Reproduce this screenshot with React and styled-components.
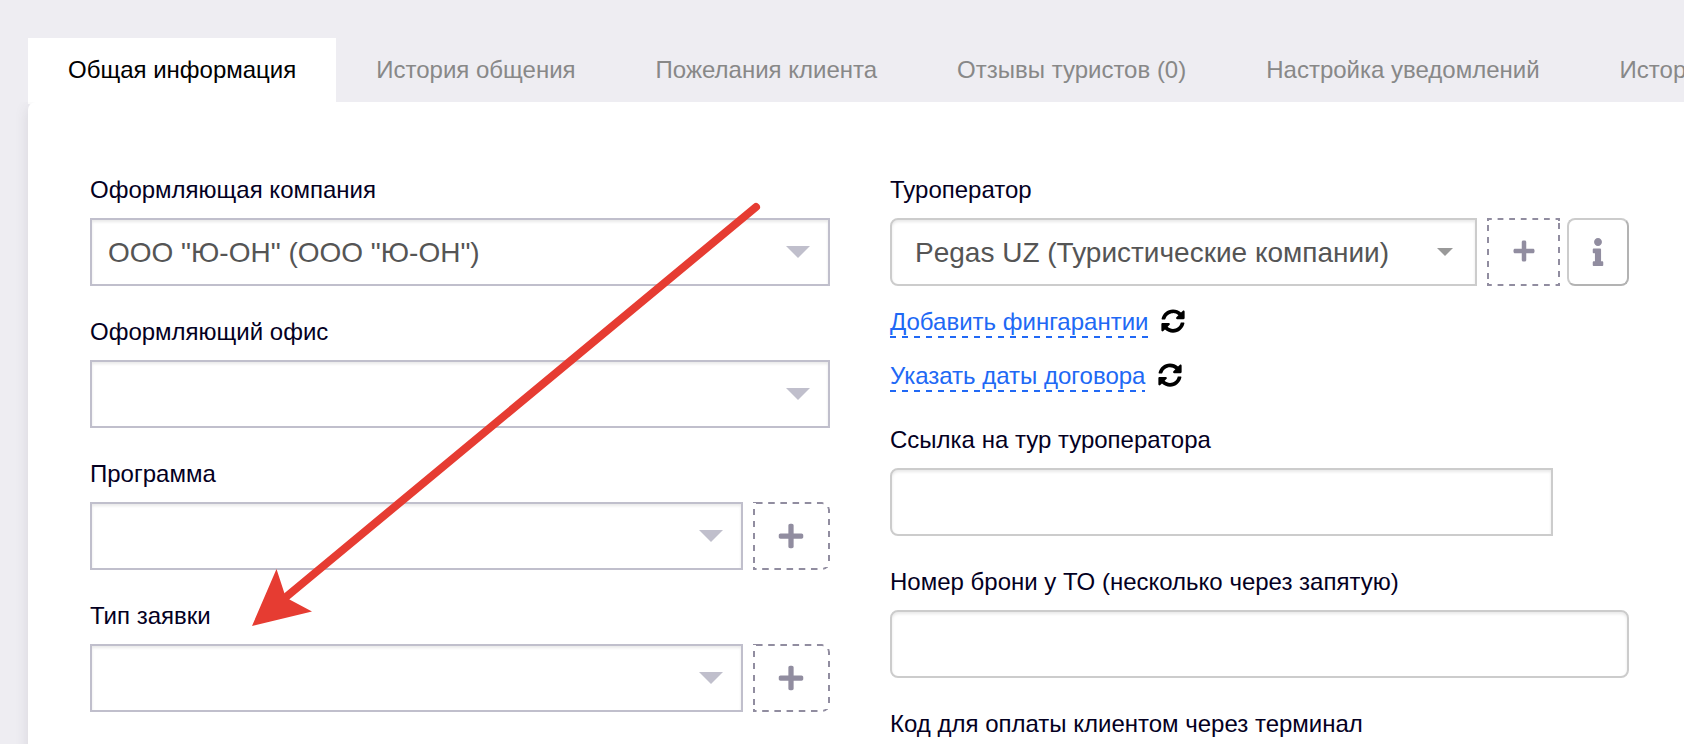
import React from 'react'
import styled, { createGlobalStyle } from 'styled-components'
import { FaSyncAlt, FaPlus, FaInfo } from 'react-icons/fa'

const GlobalStyle = createGlobalStyle`
  * {
    box-sizing: border-box;
  }

  body {
    margin: 0;
    background-color: #eeedf2;
    font-family: "Liberation Sans", Arial, sans-serif;
    font-size: 24px;
    color: #04001f;
  }
`

const StyledPage = styled.div`
  position: relative;
  height: 744px;
  padding: 38px 0 0 28px;
  overflow: hidden;
`

const StyledTabs = styled.nav`
  display: flex;
  height: 64px;
`

const StyledTab = styled.a`
  position: relative;
  flex: none;
  height: ${({ $active }) => ($active ? '66px' : '64px')};
  padding: 0 40px;
  line-height: 64px;
  white-space: nowrap;
  color: ${({ $active }) => ($active ? '#000000' : '#888888')};
  background-color: ${({ $active }) => ($active ? '#ffffff' : 'transparent')};
`

const StyledPanel = styled.main`
  display: flex;
  gap: 60px;
  height: 720px;
  padding: 74px 55px 0 62px;
  background-color: #ffffff;
  border-radius: 8px 0 0 0;
  box-shadow: 0 4px 14px rgba(69, 65, 78, 0.13);
  clip-path: inset(0 0 0 -28px);
`

const StyledColumn = styled.div`
  display: flex;
  flex-direction: column;
  gap: 32px;
  width: ${({ $width }) => $width};
`

const StyledField = styled.div`
  display: flex;
  flex-direction: column;
`

const StyledLabel = styled.label`
  height: 42px;
  line-height: 28px;
  white-space: nowrap;
`

const StyledRow = styled.div`
  display: flex;
  height: 68px;
`

const StyledControl = styled.div`
  display: flex;
  align-items: center;
  justify-content: space-between;
  flex: 1;
  height: 68px;
  margin-right: ${({ $offset }) => $offset || 0};
  padding: 0 18px 0 16px;
  border: 2px solid #c0bfcc;
  background-color: #ffffff;
  box-shadow: inset 0 2px 3px rgba(0, 0, 0, 0.09);
  font-size: 28px;
  white-space: nowrap;
  color: #555555;
`

const StyledInput = styled(StyledControl)`
  padding: 0 22px 0 23px;
  border-color: #cccccc;
  border-radius: ${({ $grouped }) => ($grouped ? '8px 0 0 8px' : '8px')};
`

const StyledValue = styled.span`
  padding-top: 2px;
`

const StyledCaret = styled.span`
  border-style: solid;
  border-color: ${({ $small }) => ($small ? '#999999' : '#c0bfcc')} transparent transparent;
  border-width: ${({ $small }) => ($small ? '8px 8px 0' : '12px 12px 0')};
`

const StyledAddButton = styled.button`
  position: relative;
  display: flex;
  align-items: center;
  justify-content: center;
  width: ${({ $compact }) => ($compact ? '73px' : '77px')};
  margin-left: 10px;
  padding: ${({ $compact }) => ($compact ? '0 0 2px 0' : '0 1px 1px 0')};
  border: 0;
  background-color: #ffffff;
  color: #918da0;
  font-size: ${({ $compact }) => ($compact ? '24px' : '28px')};

  /* dashed frame: a solid border cut by a mask, for an even 6px rhythm */
  &::before {
    content: '';
    position: absolute;
    inset: 0;
    border: 2px solid #918da0;
    border-radius: ${({ $compact }) => ($compact ? '0' : '0 8px 8px 0')};
    mask:
      linear-gradient(90deg, #000 50%, transparent 0) ${({ $compact }) => ($compact ? '-1px 0 / 11.6px' : '3px 0 / 12.2px')} 3px repeat-x,
      linear-gradient(90deg, #000 50%, transparent 0) ${({ $compact }) => ($compact ? '-1px 100% / 11.6px' : '-3px 100% / 12.2px')} 3px repeat-x,
      linear-gradient(#000 50%, transparent 0) 0 -5px / 3px 12px repeat-y,
      linear-gradient(#000 50%, transparent 0) 100% -7px / 3px 12px repeat-y;
  }
`

const StyledInfoButton = styled.button`
  display: flex;
  align-items: center;
  justify-content: center;
  width: 62px;
  margin-left: 7px;
  padding: 0 0 1px;
  border: 2px solid;
  border-color: #cccccc #b3b3b3 #b3b3b3 #cccccc;
  border-radius: 8px;
  background-color: #ffffff;
  color: #918da0;
  font-size: 28px;
`

const StyledLinks = styled.div`
  display: flex;
  flex-direction: column;
  gap: 22px;
  padding: 20px 0 2px;
`

const StyledLinkRow = styled.div`
  display: flex;
  gap: 13px;
  height: 32px;

  svg {
    margin-top: 3px;
  }
`

const StyledLink = styled.a`
  height: 32px;
  line-height: 32px;
  color: #2068f5;
  background: linear-gradient(90deg, #2068f5 50%, transparent 0) 0 100% / 12px 2px repeat-x;
`

const StyledArrow = styled.svg`
  position: absolute;
  top: 0;
  left: 0;
  pointer-events: none;
`

const tabs = [
  'Общая информация',
  'История общения',
  'Пожелания клиента',
  'Отзывы туристов (0)',
  'Настройка уведомлений',
  'История',
]

const selects = [
  { label: 'Оформляющая компания', value: 'ООО "Ю-ОН" (ООО "Ю-ОН")' },
  { label: 'Оформляющий офис' },
  { label: 'Программа', add: true },
  { label: 'Тип заявки', add: true },
]

const links = ['Добавить фингарантии', 'Указать даты договора']

const Field = ({ label, children }) => (
  <StyledField>
    <StyledLabel>{label}</StyledLabel>
    <StyledRow>{children}</StyledRow>
  </StyledField>
)

const App = () => {
  return (
    <>
      <GlobalStyle />
      <StyledPage>
        <StyledTabs>
          {tabs.map((tab, i) => (
            <StyledTab key={tab} $active={i === 0}>{tab}</StyledTab>
          ))}
        </StyledTabs>
        <StyledPanel>
          <StyledColumn $width="740px">
            {selects.map(({ label, value, add }) => (
              <Field key={label} label={label}>
                <StyledControl>
                  <StyledValue>{value}</StyledValue>
                  <StyledCaret />
                </StyledControl>
                {add && <StyledAddButton><FaPlus /></StyledAddButton>}
              </Field>
            ))}
          </StyledColumn>
          <StyledColumn $width="739px">
            <StyledField>
              <Field label="Туроператор">
                <StyledInput $grouped>
                  <StyledValue>Pegas UZ (Туристические компании)</StyledValue>
                  <StyledCaret $small />
                </StyledInput>
                <StyledAddButton $compact><FaPlus /></StyledAddButton>
                <StyledInfoButton><FaInfo /></StyledInfoButton>
              </Field>
              <StyledLinks>
                {links.map((link) => (
                  <StyledLinkRow key={link}>
                    <StyledLink>{link}</StyledLink>
                    <FaSyncAlt color="#000000" size={24} />
                  </StyledLinkRow>
                ))}
              </StyledLinks>
            </StyledField>
            <Field label="Ссылка на тур туроператора">
              <StyledInput $grouped $offset="76px" />
            </Field>
            <Field label="Номер брони у ТО (несколько через запятую)">
              <StyledInput />
            </Field>
            <Field label="Код для оплаты клиентом через терминал">
              <StyledInput />
            </Field>
          </StyledColumn>
        </StyledPanel>
        <StyledArrow width="1684" height="744" viewBox="0 0 1684 744">
          <path d="M756 207L286 597" stroke="#e63c32" strokeWidth="8" strokeLinecap="round" />
          <path d="M252 626L276.500 569L284.500 593.500L289.500 599.500L312 611.500Z" fill="#e63c32" />
        </StyledArrow>
      </StyledPage>
    </>
  )
}

export default App
